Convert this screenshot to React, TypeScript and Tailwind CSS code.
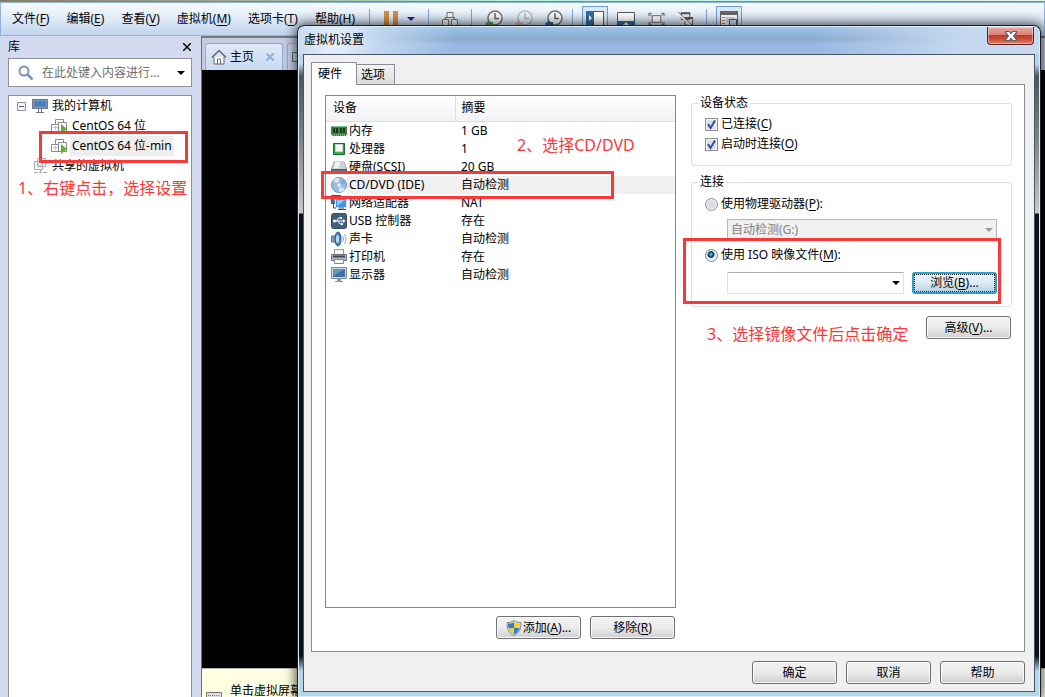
import type { ReactNode } from 'react'
import clsx from 'clsx'

const menus = [
  { label: '文件', accessKey: 'F' },
  { label: '编辑', accessKey: 'E' },
  { label: '查看', accessKey: 'V' },
  { label: '虚拟机', accessKey: 'M' },
  { label: '选项卡', accessKey: 'T' },
  { label: '帮助', accessKey: 'H' },
]

const devices = [
  { name: '内存', summary: '1 GB', icon: <MemoryIcon /> },
  { name: '处理器', summary: '1', icon: <CpuIcon /> },
  { name: '硬盘(SCSI)', summary: '20 GB', icon: <DiskIcon /> },
  { name: 'CD/DVD (IDE)', summary: '自动检测', icon: <CdIcon />, selected: true },
  { name: '网络适配器', summary: 'NAT', icon: <NetworkIcon /> },
  { name: 'USB 控制器', summary: '存在', icon: <UsbIcon /> },
  { name: '声卡', summary: '自动检测', icon: <SoundIcon /> },
  { name: '打印机', summary: '存在', icon: <PrinterIcon /> },
  { name: '显示器', summary: '自动检测', icon: <DisplayIcon /> },
]

function Svg({ children, className = 'h-4 w-4' }: { children: ReactNode; className?: string }) {
  return (
    <svg viewBox="0 0 16 16" className={clsx('block shrink-0', className)} fill="none" aria-hidden="true">
      {children}
    </svg>
  )
}

function MemoryIcon() {
  return (
    <Svg>
      <path d="M0 3h16v9h-1v1H1v-1H0z" fill="#2f8a45" />
      <path d="M0 3h16v1H0z" fill="#7cc48a" />
      <path d="M2 5h2v5H2zM5 5h2v5H5zM9 5h2v5H9zM12 5h2v5h-2z" fill="#23352a" />
      <path d="M1 12h14" stroke="#c9d8a0" strokeDasharray="1 1" />
    </Svg>
  )
}

function CpuIcon() {
  return (
    <Svg>
      <path d="M2.500 2.500h11v11h-11z" fill="#2f9a4c" stroke="#176b30" />
      <path d="M4.500 3.500h7v7h-7z" fill="#f4f7f4" stroke="#c9d6cb" />
      <path d="M4 12h8" stroke="#5cb873" />
    </Svg>
  )
}

function DiskIcon() {
  return (
    <Svg>
      <path d="M3 2h10l3 8v5H0v-5z" fill="#8b96a1" />
      <path d="M3.500 2h9l2.500 8H1z" fill="#ccd3d9" />
      <path d="M4.500 3h5l-2 6H3z" fill="#eef1f3" />
      <path d="M.5 10.500h15v4H.5z" fill="#67727e" stroke="#4e5862" />
      <path d="M11 12h3v1h-3z" fill="#6fd06f" />
    </Svg>
  )
}

function CdIcon() {
  return (
    <Svg>
      <circle cx="8" cy="8" r="7.500" fill="#9dbfdf" stroke="#7394b8" />
      <path d="M8 8L2 3.500A7 7 0 0 1 8 1zM8 8l6 4.500A7 7 0 0 1 8 15z" fill="#d6e8f7" />
      <path d="M8 8l4-6a7 7 0 0 1 3 5z" fill="#7fabd6" />
      <circle cx="8" cy="8" r="2.500" fill="#cfe0f0" stroke="#9bb9d8" />
      <circle cx="8" cy="8" r="1" fill="#fff" />
    </Svg>
  )
}

function NetworkIcon() {
  return (
    <Svg>
      <path d="M.5 0.500h9v8h-9z" fill="#4d7ba8" stroke="#35506d" />
      <path d="M4.500 3.500h11v9h-11z" fill="#3f97dd" stroke="#dfe7ee" />
      <path d="M6 5h8L6 11z" fill="#8bc8f3" />
      <path d="M2.500 9v4H5M8 13h5M7 14.500h8" stroke="#35506d" />
    </Svg>
  )
}

function UsbIcon() {
  return (
    <Svg>
      <rect x="0.500" y="0.500" width="15" height="15" rx="2" fill="#44607e" stroke="#344b64" />
      <path d="M3 8h10M5.500 8l2-3h2M7 8l2 3h2" stroke="#fff" />
      <circle cx="3.500" cy="8" r="1.500" fill="#fff" />
      <path d="M12 6l2.500 2-2.500 2zM9 4h2v2H9zM10 10h2v2h-2z" fill="#fff" />
    </Svg>
  )
}

function SoundIcon() {
  return (
    <Svg>
      <path d="M.5 5h3l4-4v14l-4-4h-3z" fill="#7e97ad" stroke="#5c748c" />
      <ellipse cx="7" cy="8" rx="3" ry="7" fill="#3d87c4" stroke="#2c5a88" />
      <ellipse cx="6.500" cy="8" rx="1.500" ry="4" fill="#b8dcf5" />
      <path d="M11.500 5c1.300 2 1.300 4 0 6M13.500 3c2 3 2 7 0 10" stroke="#86a8cc" />
    </Svg>
  )
}

function PrinterIcon() {
  return (
    <Svg>
      <path d="M3.500 0.500h9V6h-9z" fill="#f7f8fa" stroke="#9098a2" />
      <path d="M.5 5.500h15v6H.5z" fill="#b3b8c4" stroke="#6c7382" />
      <path d="M2 7.500h12" stroke="#414753" strokeWidth="2" />
      <path d="M3.500 10.500h9v4h-9z" fill="#fff" stroke="#81889a" />
    </Svg>
  )
}

function DisplayIcon() {
  return (
    <Svg>
      <path d="M0.500 0.500h15v11H.5z" fill="#cfd9e3" stroke="#7c8d9e" />
      <path d="M2 2h12v8H2z" fill="#41709f" />
      <path d="M2 2h12L2 9z" fill="#6593c0" />
      <path d="M6 12h4v2H6z" fill="#8a98a6" />
      <path d="M4 14.500h8" stroke="#8a98a6" />
    </Svg>
  )
}

function ComputerIcon() {
  return (
    <Svg>
      <path d="M0.500 1.500h15v9H.5z" fill="#4a80b9" stroke="#737373" />
      <path d="M1.500 2.500h13v7h-13z" stroke="#76a3d1" />
      <path d="M6.500 11v3M9.500 11v3M4 14.500h8" stroke="#737373" />
    </Svg>
  )
}

function VmIcon() {
  return (
    <Svg>
      <path d="M4.500 1.500h8v8h-8z" fill="#fff" stroke="#8a8a8a" />
      <path d="M.5 6.500h9v7h-9z" fill="#fff" stroke="#8a8a8a" />
      <path d="M7.500 4.500h8v9h-8z" fill="#fff" stroke="#8a8a8a" />
      <path d="M2 9.500h5M4.500 8v4" stroke="#b5c3d6" />
      <path d="M10 6l6 5-6 5z" fill="#58b531" />
    </Svg>
  )
}

function SharedIcon() {
  return (
    <Svg>
      <path d="M5.500 0.500h8v8h-8zM2.500 3.500h8v8h-8z" fill="#fff" stroke="#aaa" />
      <path d="M4 7.500h5M6.500 5v5" stroke="#c3cfde" />
      <path d="M8.500 12v2M2 14.500h4M7 14.500h3M11 14.500h4" stroke="#aaa" />
    </Svg>
  )
}

function ClockIcon({ badge, faded }: { badge: string; faded?: boolean }) {
  return (
    <svg viewBox="0 0 18 18" className={clsx('h-[18px] w-[18px] shrink-0', faded && 'opacity-40')} fill="none" aria-hidden="true">
      <circle cx="10" cy="8" r="7" fill="#f7f9fc" stroke="#737373" strokeWidth="1.500" />
      <path d="M10 3v5.500h4" stroke="#666" strokeWidth="1.500" />
      <path d="M0 14l4-4v2h4v4H4v2z" fill={badge} />
    </svg>
  )
}

function Caret({ className }: { className?: string }) {
  return (
    <svg viewBox="0 0 8 4" className={clsx('h-1 w-2 shrink-0', className)} fill="currentColor" aria-hidden="true">
      <path d="M0 0h8L4 4z" />
    </svg>
  )
}

function Separator({ className }: { className?: string }) {
  return <span className={clsx('h-5 w-px shrink-0 bg-[#7fa9d6]', className)} />
}

function AccessKey({ children }: { children: string }) {
  return (
    <>
      (<span className="underline underline-offset-2">{children}</span>)
    </>
  )
}

function PushButton({ children }: { children: ReactNode }) {
  return (
    <button
      type="button"
      className="flex h-[23px] w-[85px] shrink-0 items-center justify-center rounded-[3px] border border-[#707070] bg-linear-to-b from-[#f3f3f3] from-0% via-[#ebebeb] via-50% to-[#cfcfcf] to-100% text-black shadow-[inset_0_0_0_1px_#fafafa]"
    >
      {children}
    </button>
  )
}

function CheckBox({ id, children }: { id: string; children: ReactNode }) {
  return (
    <label htmlFor={id} className="flex h-5 items-center gap-[3px]">
      <span className="grid h-[13px] w-[13px]">
        <input
          id={id}
          type="checkbox"
          defaultChecked
          className="peer col-start-1 row-start-1 h-[13px] w-[13px] appearance-none border border-[#8e8f8f] bg-[#dde3ec] shadow-[inset_0_0_0_1px_#f4f4f4]"
        />
        <svg viewBox="0 0 13 13" className="pointer-events-none invisible col-start-1 row-start-1 peer-checked:visible" fill="none" aria-hidden="true">
          <path d="M3 6l2.500 4L10 2.500" stroke="#33509c" strokeWidth="2" />
        </svg>
      </span>
      <span>{children}</span>
    </label>
  )
}

function Radio({ id, checked, children }: { id: string; checked?: boolean; children: ReactNode }) {
  return (
    <label htmlFor={id} className="flex h-5 items-center gap-[3px]">
      <input
        id={id}
        type="radio"
        name="connection"
        defaultChecked={checked}
        className="h-[13px] w-[13px] appearance-none rounded-full border border-[#8e8f8f] bg-[#dcdee1] shadow-[inset_0_0_0_1px_#f4f4f4] checked:border-[#7a8696] checked:bg-[radial-gradient(circle_at_45%_40%,#7fd3f0_0px,#1b5f8c_2px,#0c2e52_3px,#e8eef4_4px)]"
      />
      <span>{children}</span>
    </label>
  )
}

function Toolbar() {
  return (
    <div className="flex h-[30px] items-center gap-[13px] pt-[2px]">
      <Separator />
      <button type="button" aria-label="挂起" className="ml-px flex h-4 gap-1">
        <span className="h-4 w-[5px] bg-[#cf8f47]" />
        <span className="h-4 w-[5px] bg-[#cf8f47]" />
      </button>
      <button type="button" aria-label="电源选项" className="-ml-1 text-[#1522a8]">
        <Caret />
      </button>
      <Separator />
      <button type="button" aria-label="发送 Ctrl+Alt+Del">
        <Svg>
          <path d="M5 1.500h6v5H5zM0.500 8.500h6v6h-6zM9.500 8.500h6v6h-6z" fill="#f7f7f7" stroke="#737373" />
          <path d="M3.500 8V6.500M12.500 8V6.500M3 6.500h10" stroke="#737373" />
        </Svg>
      </button>
      <Separator />
      <button type="button" aria-label="拍摄快照">
        <ClockIcon badge="#5c9a5f" />
      </button>
      <button type="button" aria-label="恢复快照" className="-ml-px">
        <ClockIcon badge="#cf8f47" faded />
      </button>
      <button type="button" aria-label="管理快照" className="-ml-px">
        <ClockIcon badge="#2f64a0" />
      </button>
      <Separator className="-ml-1" />
      <button type="button" aria-label="显示库" className="-mx-1 flex h-[26px] w-[26px] items-center justify-center border border-[#6f9fd0] bg-[#dbe8f6]">
        <svg viewBox="0 0 18 16" className="h-4 w-[18px]" fill="none" aria-hidden="true">
          <path d="M0.500 0.500h17v14H.5z" fill="#fff" stroke="#555" />
          <path d="M0 0h8v15H0z" fill="#35689f" />
          <path d="M3 4l3 3-3 3z" fill="#fff" />
        </svg>
      </button>
      <button type="button" aria-label="显示缩略图栏">
        <svg viewBox="0 0 18 16" className="h-4 w-[18px]" fill="none" aria-hidden="true">
          <path d="M0.500 1.500h17v13H.5z" fill="#fff" stroke="#555" />
          <path d="M0 10h18v5H0z" fill="#35689f" />
          <path d="M6 14l3-3 3 3z" fill="#fff" />
        </svg>
      </button>
      <button type="button" aria-label="全屏">
        <svg viewBox="0 0 18 16" className="h-4 w-[17px]" fill="none" aria-hidden="true">
          <path d="M4.500 4.500h9v7h-9z" fill="#fff" stroke="#666" />
          <path d="M1 5V2h3M14 2h3v3M1 11v3h3M14 14h3v-3M1 2l3 3M17 2l-3 3M1 14l3-3M17 14l-3-3" stroke="#666" />
        </svg>
      </button>
      <button type="button" aria-label="Unity" className="-ml-px">
        <svg viewBox="0 0 18 16" className="h-4 w-[17px]" fill="none" aria-hidden="true">
          <path d="M4.500 1.500h9v7h-9zM8.500 6.500h8v8h-8z" fill="#e9eef5" stroke="#555" />
          <path d="M4 2h10M8 7h9" stroke="#555" strokeWidth="2" />
          <path d="M0 1l15 14" stroke="#fff" strokeWidth="2" />
          <path d="M1 0.500l15 14" stroke="#666" />
        </svg>
      </button>
      <Separator className="-ml-px" />
      <button type="button" aria-label="控制台视图" className="-ml-1 flex h-[26px] w-[26px] items-center justify-center border border-[#6f9fd0] bg-[#dbe8f6]">
        <svg viewBox="0 0 18 16" className="h-4 w-[18px]" fill="none" aria-hidden="true">
          <path d="M0.500 0.500h17v14H.5z" fill="#fff" stroke="#666" />
          <path d="M0 0h18v4H0z" fill="#666" />
          <path d="M2 6.500h3M2 9.500h3M2 12.500h3" stroke="#cf8f47" />
          <path d="M6 6h9v5H6z" fill="#ccd6ef" />
          <path d="M9.500 8.500h7v6h-7z" fill="#d3ddf0" stroke="#555" />
        </svg>
      </button>
    </div>
  )
}

function Sidebar() {
  return (
    <aside className="flex w-[201px] shrink-0 flex-col pr-[9px] pl-2">
      <div className="flex h-[22px] items-center justify-between pr-px">
        <h2>库</h2>
        <button type="button" aria-label="关闭">
          <svg viewBox="0 0 8 8" className="h-2 w-2" fill="none" aria-hidden="true">
            <path d="M0 0l8 8M8 0L0 8" stroke="#000" strokeWidth="1.500" />
          </svg>
        </button>
      </div>
      <div className="flex h-[29px] shrink-0 items-center border border-[#8e9099] bg-white px-[6px]">
        <svg viewBox="0 0 16 16" className="mr-2 ml-[3px] h-4 w-4 shrink-0" fill="none" aria-hidden="true">
          <circle cx="6" cy="6" r="4.500" stroke="#7b93b8" strokeWidth="2" />
          <path d="M9.500 9.500l5 5" stroke="#7b93b8" strokeWidth="2.500" />
        </svg>
        <input
          type="text"
          aria-label="搜索库"
          placeholder="在此处键入内容进行..."
          className="w-full min-w-0 flex-1 bg-transparent leading-5 outline-none placeholder:text-[#6d6d6d]"
        />
        <Caret className="text-black" />
      </div>
      <div className="relative mt-2 flex-1 border border-b-0 border-[#8e9099] bg-white leading-5">
        <ul>
          <li>
            <div className="flex h-5 items-center gap-1 pl-2">
              <svg viewBox="0 0 9 9" className="mr-[2px] h-[9px] w-[9px] shrink-0" fill="none" aria-hidden="true">
                <path d="M0.500 0.500h8v8h-8z" fill="#f4f6f9" stroke="#919191" />
                <path d="M2 4.500h5" stroke="#41619c" />
              </svg>
              <ComputerIcon />
              我的计算机
            </div>
            <ul className="pl-[42px]">
              <li className="flex h-5 items-center gap-[3px]">
                <VmIcon />
                <span className="px-[2px]">CentOS 64 位</span>
              </li>
              <li className="flex h-5 items-center gap-[3px]">
                <VmIcon />
                <span className="bg-[#eeeeee] px-[2px]">CentOS 64 位-min</span>
              </li>
            </ul>
          </li>
          <li className="flex h-5 items-center gap-1 pl-[23px]">
            <SharedIcon />
            共享的虚拟机
          </li>
        </ul>
        <div className="absolute top-[35px] left-[30px] h-8 w-[149px] border-3 border-[#fb3838]" />
        <p className="absolute top-[82px] left-[9px] text-base/5 whitespace-nowrap text-[#fb3838]">1、右键点击，选择设置</p>
      </div>
    </aside>
  )
}

function Workspace() {
  return (
    <main className="flex min-w-0 flex-1 flex-col border-l border-[#6f6f78]">
      <div className="flex h-[34px] shrink-0 items-end gap-1 border-t-2 border-[#77777f] bg-[#c5cbe0] pl-[3px]">
        <div className="flex h-[27px] w-[78px] items-center rounded-t-[3px] border border-b-0 border-[#86aede] bg-linear-to-b from-[#dfe9f8] to-[#c8daf2] pl-[5px]">
          <svg viewBox="0 0 16 16" className="mr-[3px] h-4 w-4 shrink-0" fill="none" aria-hidden="true">
            <path d="M3 8v7h10V8" fill="#fff" stroke="#666" />
            <path d="M1 8.500l7-7 7 7" stroke="#666" strokeWidth="1.500" />
            <path d="M6.500 15v-5h3v5" stroke="#666" />
          </svg>
          <a href="#home" className="shrink-0">主页</a>
          <svg viewBox="0 0 8 8" className="ml-3 h-2 w-2 shrink-0" fill="none" aria-hidden="true">
            <path d="M0 0l8 8M8 0L0 8" stroke="#8fb4d8" strokeWidth="2" />
          </svg>
        </div>
        <div className="flex h-[27px] w-[78px] items-center rounded-t-[3px] border border-b-0 border-[#86aede] bg-[#c8d3e8] pl-1">
          <span className="h-[10px] w-3 border border-[#666]" />
        </div>
      </div>
      <div className="flex-1 bg-black" />
      <div className="flex h-[29px] shrink-0 gap-2 overflow-hidden border-t border-[#b8b8b8] bg-[#ffffe1] pt-4 pl-1 leading-3">
        <svg viewBox="0 0 16 16" className="mt-[5px] h-4 w-4 shrink-0" fill="none" aria-hidden="true">
          <path d="M0.500 2.500h15v9H.5z" fill="#ddd" stroke="#777" />
          <path d="M2 5.500h12M2 8.500h12" stroke="#777" strokeDasharray="1 1" />
        </svg>
        <span className="h-3 whitespace-nowrap">单击虚拟屏幕</span>
      </div>
    </main>
  )
}

function DeviceList() {
  return (
    <div className="relative flex-1 border border-[#828790] bg-white">
      <table className="w-full table-fixed border-collapse text-left">
        <thead>
          <tr className="h-[25px] bg-linear-to-b from-white to-[#f1f2f4]">
            <th className="w-[129px] border-r border-b border-[#dcdde0] p-0 pl-[7px] font-normal">设备</th>
            <th className="border-b border-[#dcdde0] p-0 pl-[6px] font-normal">摘要</th>
          </tr>
        </thead>
        <tbody>
          {devices.map((device) => (
            <tr key={device.name} className="h-[18px]">
              <td className="p-0 pl-[5px]">
                <div className="flex h-[18px] items-center">
                  {device.icon}
                  <span className={clsx('flex-1 pl-[2px] leading-[18px]', device.selected && 'bg-[#f0f0f0]')}>{device.name}</span>
                </div>
              </td>
              <td className={clsx('p-0 pl-[6px] leading-[18px]', device.selected && 'bg-[#f0f0f0]')}>{device.summary}</td>
            </tr>
          ))}
        </tbody>
      </table>
      <div className="absolute top-[75px] -left-[5px] h-7 w-[293px] border-3 border-[#fb3838]" />
      <p className="absolute top-[39px] left-[191px] text-base/5 whitespace-nowrap text-[#fb3838]">2、选择CD/DVD</p>
    </div>
  )
}

function DeviceOptions() {
  return (
    <div className="relative flex min-w-0 flex-1 flex-col">
      <fieldset className="h-[71px] rounded-[3px] border border-[#d5dfe5] pl-[13px]">
        <legend className="-ml-[7px] px-[2px] leading-4">设备状态</legend>
        <div className="pt-[3px]">
          <CheckBox id="connected">
            已连接<AccessKey>C</AccessKey>
          </CheckBox>
          <CheckBox id="connect-at-power-on">
            启动时连接<AccessKey>O</AccessKey>
          </CheckBox>
        </div>
      </fieldset>
      <fieldset className="mt-2 h-[133px] rounded-[3px] border border-[#d5dfe5] pr-[14px] pl-[13px]">
        <legend className="-ml-[7px] px-[2px] leading-4">连接</legend>
        <div className="pt-1">
          <Radio id="physical-drive">
            使用物理驱动器<AccessKey>P</AccessKey>:
          </Radio>
        </div>
        <div className="mt-[5px] ml-[22px] grid items-center">
          <select
            disabled
            aria-label="物理驱动器"
            className="col-start-1 row-start-1 h-[22px] w-full appearance-none border border-[#b5b5b5] bg-[#f0f0f0] pl-[3px] text-[#838383] opacity-100"
          >
            <option>自动检测(G:)</option>
          </select>
          <Caret className="pointer-events-none col-start-1 row-start-1 mr-1 justify-self-end text-[#9a9a9a]" />
        </div>
        <div className="mt-1">
          <Radio id="iso-image" checked>
            使用 ISO 映像文件<AccessKey>M</AccessKey>:
          </Radio>
        </div>
        <div className="mt-[7px] ml-[22px] flex items-center gap-2">
          <div className="grid flex-1 items-center">
            <select aria-label="ISO 映像文件" className="col-start-1 row-start-1 h-[22px] w-full appearance-none border border-[#dcdfe4] border-t-[#abadb3] bg-white">
              <option></option>
            </select>
            <Caret className="pointer-events-none col-start-1 row-start-1 mr-1 justify-self-end text-black" />
          </div>
          <button
            type="button"
            className="h-[22px] w-[85px] rounded-[3px] border-2 border-[#2f9fcf] bg-linear-to-b from-[#e9f3f9] via-[#dcebf4] to-[#b6d3e4] p-0 text-black"
          >
            <span className="flex h-[18px] items-center justify-center border border-dotted border-[#222]">
              <span>
                浏览<AccessKey>B</AccessKey>...
              </span>
            </span>
          </button>
        </div>
      </fieldset>
      <div className="mt-[9px] flex justify-end pr-px">
        <PushButton>
          高级<AccessKey>V</AccessKey>...
        </PushButton>
      </div>
      <div className="absolute top-[143px] -left-2 h-[66px] w-[318px] border-3 border-[#fb3838]" />
      <p className="absolute top-[229px] left-4 text-base/5 whitespace-nowrap text-[#fb3838]">3、选择镜像文件后点击确定</p>
    </div>
  )
}

function SettingsDialog() {
  return (
    <section
      role="dialog"
      aria-label="虚拟机设置"
      className="absolute top-[25px] right-1 bottom-0 left-[297px] flex flex-col rounded-t-[7px] border border-b-0 border-[#1c2128] bg-[linear-gradient(#a9c8ea_0px,#bcd5ef_38px,#4e5458_50px,#7b8084_110px,#c6c8ca_187px,#0b1119_188px,#0b1119_630px,#b4d8ea_645px)] px-[5px] pb-[5px] shadow-[0_0_12px_2px_rgba(0,0,0,0.65),inset_0_0_0_1px_#dcebf8]"
    >
      <header className="-mx-1 mt-px flex h-[27px] shrink-0 items-start justify-between rounded-t-[6px] bg-[radial-gradient(circle_at_35px_14px,#eaf3fb_0px,#c9def3cc_45px,#9bbae000_120px),linear-gradient(90deg,#9bbce400_70%,#c6d9f0_90%),linear-gradient(#9cc3ec,#8cabcc_45%,#9ab9e2_65%)] pr-[5px] pl-[5px]">
        <h1 className="leading-[26px]">虚拟机设置</h1>
        <button
          type="button"
          aria-label="关闭"
          className="flex h-[18px] w-[47px] items-center justify-center rounded-b-[4px] border border-t-0 border-[#5b2424] bg-[linear-gradient(#e9aaa0,#d98275_45%,#bd3a26_50%,#cf5a42_80%,#e0886f)] shadow-[inset_0_0_0_1px_#ffffff66]"
        >
          <svg viewBox="0 0 12 10" className="h-[10px] w-3" fill="none" aria-hidden="true">
            <path d="M0 0h4.500L6 2l1.500-2H12v2L9 5l3 3v2H7.500L6 8l-1.500 2H0V8l3-3-3-3z" fill="#5a5f74" />
            <path d="M1 1h3l2 2.500L8 1h3L7.800 5 11 9H8L6 6.500 4 9H1l3.200-4z" fill="#fff" />
          </svg>
        </button>
      </header>
      <div className="flex flex-1 flex-col border border-[#4a5568] bg-[#f0f0f0] pt-[7px] pr-[9px] pb-[7px] pl-[7px]">
        <div role="tablist" className="flex items-end">
          <button type="button" role="tab" aria-selected="true" className="z-10 -mb-px h-[23px] w-[46px] border border-b-0 border-[#898c95] bg-white pb-px pl-[6px] text-left">
            硬件
          </button>
          <button type="button" role="tab" aria-selected="false" className="h-5 w-[38px] border border-b-0 border-l-0 border-[#898c95] bg-linear-to-b from-[#f3f3f3] to-[#dcdcdc] pl-1 text-left">
            选项
          </button>
        </div>
        <div role="tabpanel" className="flex flex-1 gap-[15px] border border-[#898c95] bg-white pt-[10px] pr-3 pb-3 pl-[13px]">
          <div className="flex w-[351px] shrink-0 flex-col">
            <DeviceList />
            <div className="mt-2 flex justify-end gap-[9px] pr-px">
              <PushButton>
                <Svg className="mr-px h-4 w-4">
                  <path d="M8 0.500c2 1.500 4.500 2 7 2 0 6-1.500 10.500-7 13-5.500-2.500-7-7-7-13 2.500 0 5-.5 7-2z" fill="#dfe4ea" stroke="#7b8794" />
                  <path d="M8 2v6H2.500C2 6.500 2 5 2 3.500 4.500 3.500 6.500 3 8 2zM8 8h5.500c-.8 3-2.500 5-5.500 6.500z" fill="#2f79d0" />
                  <path d="M8 2c1.500 1 3.500 1.500 6 1.500 0 1.500 0 3-.5 4.500H8zM8 8v6.500C5 13 3.300 11 2.500 8z" fill="#f6cf2f" />
                </Svg>
                添加<AccessKey>A</AccessKey>...
              </PushButton>
              <PushButton>
                移除<AccessKey>R</AccessKey>
              </PushButton>
            </div>
          </div>
          <DeviceOptions />
        </div>
        <div className="mt-[9px] flex justify-end gap-[9px]">
          <PushButton>确定</PushButton>
          <PushButton>取消</PushButton>
          <PushButton>帮助</PushButton>
        </div>
      </div>
    </section>
  )
}

export default function App() {
  return (
    <div className="relative flex h-screen flex-col overflow-hidden bg-[#d3d9ee] font-['Noto_Sans','Noto_Sans_CJK_SC',sans-serif] text-xs text-black">
      <div className="h-[2px] shrink-0 border-b border-[#6f8b8b] bg-linear-to-r from-[#8a7a60] via-[#b9efdf] to-[#e6f5f0]" />
      <div className="flex h-[34px] shrink-0 items-start border border-[#8fb4de] bg-linear-to-b from-[#f7fbff] via-[#dfeaf7] to-[#bfd4ee]">
        <nav className="flex h-8 w-[368px] shrink-0 items-center gap-[17px] pl-[11px] whitespace-nowrap">
          {menus.map((menu) => (
            <button key={menu.accessKey} type="button">
              {menu.label}
              <AccessKey>{menu.accessKey}</AccessKey>
            </button>
          ))}
        </nav>
        <Toolbar />
      </div>
      <div className="flex min-h-0 flex-1">
        <Sidebar />
        <Workspace />
      </div>
      <SettingsDialog />
    </div>
  )
}
